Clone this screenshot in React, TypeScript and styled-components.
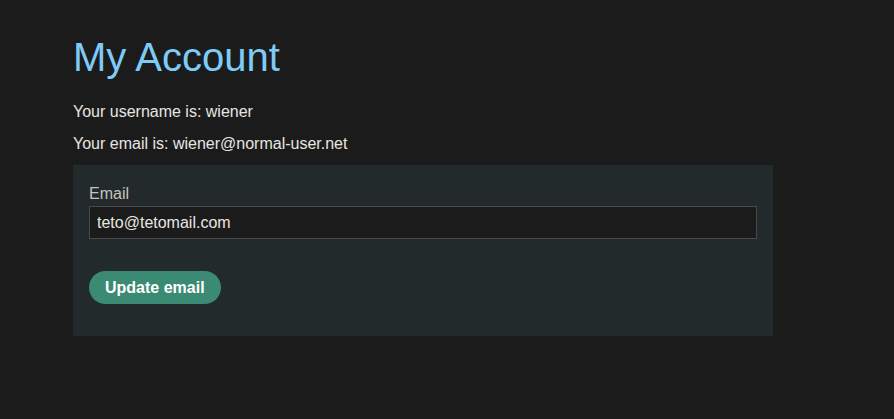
import React, { useState } from "react";
import styled, { createGlobalStyle } from "styled-components";

const GlobalStyle = createGlobalStyle`
  html, body {
    margin: 0;
    padding: 0;
    background: #1b1b1b;
  }
  body {
    font-family: "Liberation Sans", Arial, sans-serif;
    color: #e8e6e3;
  }
`;

const Page = styled.div`
  min-height: 419px;
  padding: 32px 0 0 73px;
  box-sizing: border-box;
`;

const Title = styled.h1`
  margin: 0 0 21px;
  font-size: 40px;
  font-weight: 400;
  line-height: 50px;
  color: #7fcbf8;
`;

const Info = styled.p`
  margin: 0 0 14px;
  font-size: 16px;
  line-height: 18px;
  color: #e8e6e3;
`;

const Panel = styled.form`
  width: 700px;
  box-sizing: border-box;
  margin-top: -2px;
  padding: 19px 16px 32px;
  background: #222a2c;
  display: flex;
  flex-direction: column;
  align-items: flex-start;
`;

const Label = styled.label`
  font-size: 16px;
  line-height: 20px;
  color: #c8c3bc;
  margin-bottom: 2px;
`;

const Input = styled.input`
  width: 100%;
  height: 33px;
  box-sizing: border-box;
  padding: 0 7px;
  margin: 0 0 32px;
  background: #1b1b1b;
  border: 1px solid #48494a;
  color: #e8e6e3;
  font-family: "Liberation Sans", Arial, sans-serif;
  font-size: 16px;
  outline: none;
`;

const Button = styled.button`
  height: 33px;
  padding: 0 16px;
  border: none;
  border-radius: 17px;
  background: #3b8a73;
  color: #ffffff;
  font-family: "Liberation Sans", Arial, sans-serif;
  font-size: 16px;
  font-weight: 700;
  cursor: pointer;
`;

export default function App() {
  const [email, setEmail] = useState("teto@tetomail.com");
  return (
    <>
      <GlobalStyle />
      <Page>
        <Title>My Account</Title>
        <Info>Your username is: wiener</Info>
        <Info>Your email is: wiener@normal-user.net</Info>
        <Panel onSubmit={(e) => e.preventDefault()}>
          <Label htmlFor="email">Email</Label>
          <Input
            id="email"
            value={email}
            onChange={(e) => setEmail(e.target.value)}
          />
          <Button type="submit">Update email</Button>
        </Panel>
      </Page>
    </>
  );
}
